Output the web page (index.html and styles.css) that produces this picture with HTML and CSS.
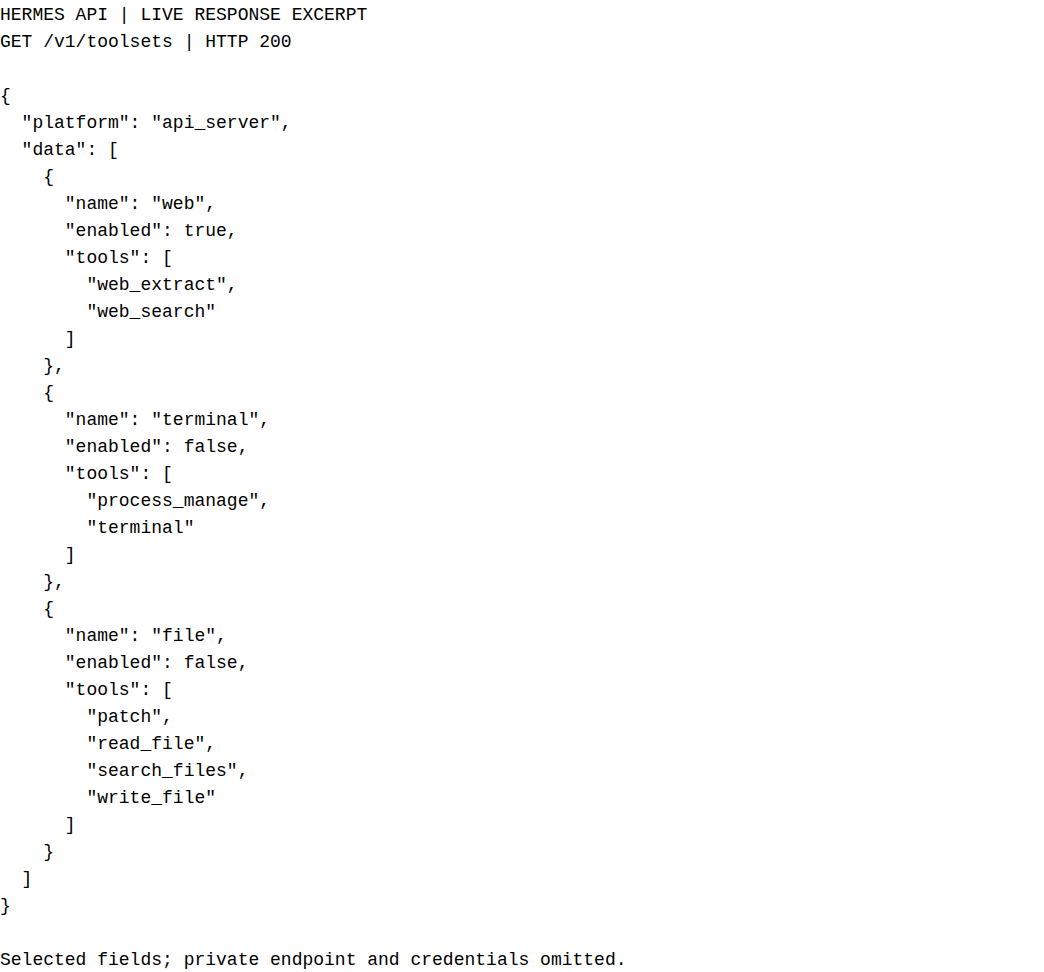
FILE: index.html
```html
<!DOCTYPE html>
<html lang="en">
<head>
<meta charset="utf-8">
<title>Hermes API</title>
<link rel="stylesheet" href="styles.css">
</head>
<body>
<pre class="output">HERMES API | LIVE RESPONSE EXCERPT
GET /v1/toolsets | HTTP 200

{
  "platform": "api_server",
  "data": [
    {
      "name": "web",
      "enabled": true,
      "tools": [
        "web_extract",
        "web_search"
      ]
    },
    {
      "name": "terminal",
      "enabled": false,
      "tools": [
        "process_manage",
        "terminal"
      ]
    },
    {
      "name": "file",
      "enabled": false,
      "tools": [
        "patch",
        "read_file",
        "search_files",
        "write_file"
      ]
    }
  ]
}

Selected fields; private endpoint and credentials omitted.</pre>
</body>
</html>
```

FILE: styles.css
```css
html, body {
  margin: 0;
  padding: 0;
  background: #ffffff;
}
.output {
  margin: 0;
  padding-top: 2px;
  font-family: "Liberation Mono", "Courier New", monospace;
  font-size: 18px;
  line-height: 27px;
  color: #000000;
  white-space: pre;
}
```
